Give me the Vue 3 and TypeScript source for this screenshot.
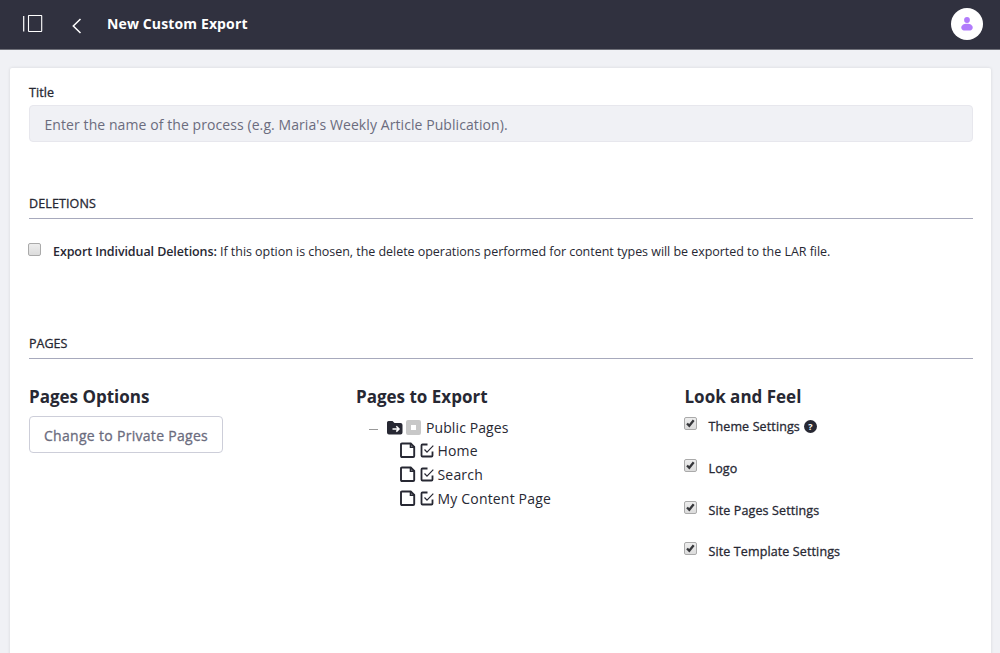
<script setup lang="ts">
interface Setting {
  label: string
  help?: boolean
}
const settings: Setting[] = [
  { label: 'Theme Settings', help: true },
  { label: 'Logo' },
  { label: 'Site Pages Settings' },
  { label: 'Site Template Settings' },
]
const pages: string[] = ['Home', 'Search', 'My Content Page']
</script>

<template>
  <div class="app">
    <header class="bar">
      <svg class="menu" width="20" height="18" viewBox="0 0 20 18" fill="none" stroke="#fff">
        <path d="M.7 1v15.5" stroke-width="1.2" />
        <rect x="5.5" y=".5" width="13.2" height="16" rx=".6" stroke-width="1.1" />
      </svg>
      <svg class="back" width="10" height="16" viewBox="0 0 10 16" fill="none" stroke="#fff" stroke-width="1.5">
        <path d="M8.5 1 1.3 8l7.2 7" />
      </svg>
      <h1>New Custom Export</h1>
      <span class="avatar">
        <svg width="12" height="14" viewBox="0 0 12 14" fill="#b17bfb">
          <circle cx="6" cy="3" r="2.9" />
          <path d="M6 6.8C9.5 6.8 11.7 8.4 11.7 10.6 11.7 12.5 10.5 13.4 9.1 13.4H2.9C1.5 13.4.3 12.5.3 10.6.3 8.4 2.5 6.8 6 6.8Z" />
        </svg>
      </span>
    </header>

    <main class="card">
      <label class="title-label">Title</label>
      <div class="field">Enter the name of the process (e.g. Maria's Weekly Article Publication).</div>

      <h2 class="deletions">DELETIONS</h2>
      <div class="option">
        <span class="box"></span>
        <p><b>Export Individual Deletions:</b> <span>If this option is chosen, the delete operations performed for content types will be exported to the LAR file.</span></p>
      </div>

      <h2 class="pages-head">PAGES</h2>
      <div class="columns">
        <section>
          <h3>Pages Options</h3>
          <button type="button">Change to Private Pages</button>
        </section>
        <section>
          <h3>Pages to Export</h3>
          <div class="root">
            <span class="minus"></span>
            <svg width="16" height="14" viewBox="0 0 16 14">
              <path d="M1.5 0H5.5L7.500 2H13.5Q15.5 2 15.5 4V11.5Q15.5 13.5 13.5 13.5H2Q0 13.5 0 11.5V1.5Q0 0 1.5 0Z" fill="#272833" />
              <path d="M5.5 7.9H11.5M9.3 5.2 12 7.9 9.3 10.6" fill="none" stroke="#fff" stroke-width="1.5" />
            </svg>
            <span class="partial"></span>
            <span class="public">Public Pages</span>
          </div>
          <ul>
            <li v-for="page in pages" :key="page">
              <svg width="16" height="16" viewBox="0 0 16 16" fill="none" stroke="#272833">
                <path d="M2 1.5H10.7L14.2 5V14Q14.2 15 13.2 15H2Q1 15 1 14V2.5Q1 1.5 2 1.5Z" stroke-width="1.9" />
                <path d="M10.5 1.5V5.3H14.5" stroke-width="1.6" />
              </svg>
              <svg class="check" width="15" height="15" viewBox="0 0 15 15" fill="none" stroke="#272833">
                <path d="M7.5 1.5H2.500Q1.500 1.500 1.500 2.500V12.500Q1.500 13.500 2.500 13.500H11.500Q12.500 13.500 12.500 12.500V8.500" stroke-width="1.8" />
                <path d="M4.5 6.5 7 9.2 13.3 2.7" stroke-width="1.2" />
              </svg>
              <span>{{ page }}</span>
            </li>
          </ul>
        </section>
        <section>
          <h3>Look and Feel</h3>
          <div v-for="s in settings" :key="s.label" class="setting">
            <span class="box">
              <svg width="13" height="13" viewBox="0 0 13 13" fill="none" stroke="#36373b" stroke-width="2.3">
                <path d="M3 6.5 5.3 8.8 9.7 3.3" />
              </svg>
            </span>
            <span class="name">{{ s.label }}</span>
            <span v-if="s.help" class="help">?</span>
          </div>
        </section>
      </div>
    </main>
  </div>
</template>

<style>
body { background: #f0f1f5; overflow: hidden; }
</style>
<style scoped>
.app, .app * { box-sizing: border-box; }
.app { height: 653px; overflow: hidden; background: #f0f1f5; color: #272833; font-family: "Open Sans", "Noto Sans", sans-serif; font-size: 13px; white-space: nowrap; }
h1, h2, h3, p, ul { margin: 0; padding: 0; }
svg { display: block; flex: none; }
.bar { height: 50px; background: #30313f; border-bottom: 1px solid #70717a; display: flex; align-items: center; padding: 0 17px 0 23px; }
.menu { margin-top: -2px; }
.back { margin: 2px 0 0 29px; }
h1 { margin: -1px 0 0 25px; color: #fff; font-size: 14px; font-weight: 700; line-height: 20px; letter-spacing: .13px; }
.avatar { margin: -2px 0 0 auto; width: 32px; height: 32px; border-radius: 50%; background: #fff; display: flex; align-items: center; justify-content: center; }
.card { margin: 18px 9px 0 10px; height: 600px; padding: 15px 18px 0 19px; background: #fff; border-radius: 2px 2px 0 0; box-shadow: 0 0 3px rgba(39, 40, 51, .14); }
.title-label, h2, .name, button { -webkit-text-stroke: .3px currentColor; }
.title-label { display: block; height: 22px; line-height: 20px; font-size: 12.5px; letter-spacing: .1px; }
.field { height: 37px; border: 1px solid #e7e7ed; border-radius: 4px; background: #f0f1f5; color: #6b6c7e; padding: 0 14.5px; line-height: 38px; font-size: 14px; letter-spacing: .08px; }
h2 { height: 26px; border-bottom: 1px solid #a7a9bc; font-size: 12.5px; font-weight: 400; line-height: 22px; letter-spacing: .12px; }
.deletions { margin-top: 51px; }
.pages-head { margin-top: 71px; letter-spacing: 0; }
.option { display: flex; margin-top: 23px; height: 20px; }
.box { flex: none; width: 13px; height: 13px; border: 1px solid #aaa; border-radius: 2px; background: linear-gradient(#ededed, #dcdcdc); }
.box svg { margin: -1px; }
.option .box { margin-top: 1px; margin-left: -1px; }
.option p { margin: 0 0 0 12px; line-height: 20px; font-size: 12.5px; letter-spacing: -.04px; }
.option b { font-weight: 600; letter-spacing: -.09px; }
.columns { display: grid; grid-template-columns: 327px 328.5px 1fr; padding-top: 25px; }
h3 { height: 32px; font-size: 17px; font-weight: 700; line-height: 25px; }
button { display: flex; align-items: center; width: 194px; height: 37px; padding: 1px 0 0 14px; border: 1px solid #cdced9; border-radius: 4px; background: #fff; color: #6b6c7e; font: 400 14px "Open Sans", sans-serif; letter-spacing: .3px; }
.root { display: flex; align-items: center; height: 24px; padding-left: 13px; font-size: 14px; }
.public { letter-spacing: .1px; margin-top: -1px; }
.minus { width: 9px; height: 1px; background: #999; margin-right: 9px; margin-top: 3px; }
.partial { width: 15px; height: 15px; border-radius: 2px; border: 5px solid #c8c8c8; background: #fff; margin: -1px 5px 0 3px; }
ul { list-style: none; margin-top: -2px; }
li { display: flex; align-items: center; height: 24.2px; padding-left: 44px; font-size: 14px; letter-spacing: .18px; }
.check { margin: 0 2.5px 0 4px; }
.setting { display: flex; height: 41.8px; }
.setting .box { margin: 1px 0 0 -1px; }
.name { margin: 1px 0 0 12px; line-height: 20px; font-size: 12.5px; letter-spacing: .12px; }
.help { margin: 4px 0 0 4px; width: 13px; height: 13px; border-radius: 50%; background: #272833; color: #fff; font-size: 9px; font-weight: 700; line-height: 13px; text-align: center; }
</style>
